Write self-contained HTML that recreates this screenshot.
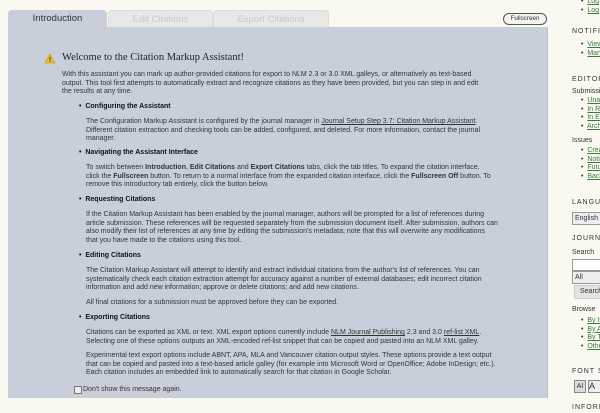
<!DOCTYPE html>
<html><head><meta charset="utf-8"><style>
html,body{overflow:hidden}
body{margin:0;width:600px;height:413px;background:#f9f9f1;font-family:"Liberation Sans",sans-serif;position:relative;color:#333}
.a{position:absolute;white-space:nowrap}
.t{font-size:7px;color:#333}
.b{font-weight:bold;color:#111}
.panel{position:absolute;left:8px;top:27px;width:539px;height:371px;background:#c8cfdb;border-right:1px solid #b8bfcb}
.tab{position:absolute;top:10px;height:17px;font-size:9.5px;text-align:center;line-height:17px;border-radius:4px 4px 0 0}
u{text-decoration:underline}
.s{font-size:7px;color:#333}
.lk{color:#3a7a3a;text-decoration:underline}
.h{font-size:7px;letter-spacing:1px;color:#333}
</style></head><body>
<div class="panel"></div>
<div class="tab" style="left:8px;width:99px;background:#c8cfdb;color:#333">Introduction</div>
<div class="tab" style="left:108px;width:103px;background:#e8e8e6;color:#c8c8c8;border:1px solid #ddd;border-bottom:none;height:16px">Edit Citations</div>
<div class="tab" style="left:213px;width:114px;background:#e8e8e6;color:#c8c8c8;border:1px solid #ddd;border-bottom:none;height:16px">Export Citations</div>
<div class="a" style="left:503px;top:13px;width:42px;height:10px;border:1px solid #555;border-radius:6px;background:#f4f4f0;font-size:6.3px;line-height:10px;text-align:center">Fullscreen</div>
<svg class="a" style="left:44px;top:53px" width="12" height="11"><path d="M6 1L11 10H1Z" fill="#f2c230" stroke="#c9a020" stroke-width=".8"/><rect x="5.5" y="4" width="1" height="3.5" fill="#333"/><rect x="5.5" y="8" width="1" height="1" fill="#333"/></svg>
<div class="a" style="left:62px;top:52px;font-family:'Liberation Serif',serif;font-size:10.5px;color:#222">Welcome to the Citation Markup Assistant!</div>
<div class="a t" style="left:62px;top:71px;line-height:8.7px">With this assistant you can mark up author-provided citations for export to NLM 2.3 or 3.0 XML galleys, or alternatively as text-based<br>output. This tool first attempts to automatically extract and recognize citations as they have been provided, but you can step in and edit<br>the results at any time.</div>
<div class="a t b" style="left:79px;top:103px">• &nbsp;Configuring the Assistant</div>
<div class="a t" style="left:86px;top:118px;line-height:8.7px">The Configuration Markup Assistant is configured by the journal manager in <u>Journal Setup Step 3.7: Citation Markup Assistant</u>.<br>Different citation extraction and checking tools can be added, configured, and deleted. For more information, contact the journal<br>manager.</div>
<div class="a t b" style="left:79px;top:149px">• &nbsp;Navigating the Assistant Interface</div>
<div class="a t" style="left:86px;top:164px;line-height:8.7px">To switch between <b>Introduction</b>, <b>Edit Citations</b> and <b>Export Citations</b> tabs, click the tab titles. To expand the citation interface,<br>click the <b>Fullscreen</b> button. To return to a normal interface from the expanded citation interface, click the <b>Fullscreen Off</b> button. To<br>remove this introductory tab entirely, click the button below.</div>
<div class="a t b" style="left:79px;top:196px">• &nbsp;Requesting Citations</div>
<div class="a t" style="left:86px;top:211px;line-height:8.7px">If the Citation Markup Assistant has been enabled by the journal manager, authors will be prompted for a list of references during<br>article submission. These references will be requested separately from the submission document itself. After submission, authors can<br>also modify their list of references at any time by editing the submission's metadata; note that this will overwrite any modifications<br>that you have made to the citations using this tool.</div>
<div class="a t b" style="left:79px;top:252px">• &nbsp;Editing Citations</div>
<div class="a t" style="left:86px;top:267px;line-height:8.7px">The Citation Markup Assistant will attempt to identify and extract individual citations from the author's list of references. You can<br>systematically check each citation extraction attempt for accuracy against a number of external databases; edit incorrect citation<br>information and add new information; approve or delete citations; and add new citations.</div>
<div class="a t" style="left:86px;top:299px">All final citations for a submission must be approved before they can be exported.</div>
<div class="a t b" style="left:79px;top:314px">• &nbsp;Exporting Citations</div>
<div class="a t" style="left:86px;top:329px;line-height:8.7px">Citations can be exported as XML or text. XML export options currently include <u>NLM Journal Publishing</u> 2.3 and 3.0 <u>ref-list XML</u>.<br>Selecting one of these options outputs an XML-encoded ref-list snippet that can be copied and pasted into an NLM XML galley.</div>
<div class="a t" style="left:86px;top:352px;line-height:8.7px">Experimental text export options include ABNT, APA, MLA and Vancouver citation output styles. These options provide a text output<br>that can be copied and pasted into a text-based article galley (for example into Microsoft Word or OpenOffice; Adobe InDesign; etc.).<br>Each citation includes an embedded link to automatically search for that citation in Google Scholar.</div>
<div class="a" style="left:74px;top:386px;width:6px;height:6px;border:1px solid #777;border-radius:1px;background:#eee"></div>
<div class="a t" style="left:83px;top:386px">Don't show this message again.</div>

<div class="a s" style="left:581px;top:-3px;line-height:9px">•&nbsp; <span class="lk">Log</span><br>•&nbsp; <span class="lk">Log</span></div>
<div class="a h" style="left:572px;top:28px">NOTIFICATIONS</div>
<div class="a s" style="left:581px;top:41px;line-height:8.7px">•&nbsp; <span class="lk">View</span><br>•&nbsp; <span class="lk">Manage</span></div>
<div class="a h" style="left:572px;top:76px">EDITOR</div>
<div class="a s" style="left:572px;top:88px">Submissions</div>
<div class="a s" style="left:581px;top:97px;line-height:8.7px">•&nbsp; <span class="lk">Unassigned</span><br>•&nbsp; <span class="lk">In Review</span><br>•&nbsp; <span class="lk">In Editing</span><br>•&nbsp; <span class="lk">Archives</span></div>
<div class="a s" style="left:572px;top:137px">Issues</div>
<div class="a s" style="left:581px;top:147px;line-height:8.7px">•&nbsp; <span class="lk">Create</span><br>•&nbsp; <span class="lk">Notify</span><br>•&nbsp; <span class="lk">Future</span><br>•&nbsp; <span class="lk">Back</span></div>
<div class="a h" style="left:572px;top:199px">LANGUAGE</div>
<div class="a s" style="left:572px;top:212px;width:40px;height:11px;border:1px solid #999;background:#eee;line-height:11px;padding-left:2px">English</div>
<div class="a h" style="left:572px;top:235px">JOURNAL</div>
<div class="a s" style="left:572px;top:249px">Search</div>
<div class="a" style="left:572px;top:259px;width:40px;height:10px;border:1px solid #999;background:#fff"></div>
<div class="a s" style="left:572px;top:271px;width:40px;height:11px;border:1px solid #999;background:#eee;line-height:11px;padding-left:2px">All</div>
<div class="a s" style="left:574px;top:285px;width:40px;height:12px;border:1px solid #ccc;background:#e4e4e0;line-height:12px;padding-left:5px;border-radius:2px">Search</div>
<div class="a s" style="left:572px;top:306px">Browse</div>
<div class="a s" style="left:581px;top:317px;line-height:8.7px">•&nbsp; <span class="lk">By Issue</span><br>•&nbsp; <span class="lk">By Author</span><br>•&nbsp; <span class="lk">By Title</span><br>•&nbsp; <span class="lk">Other</span></div>
<div class="a h" style="left:572px;top:368px">FONT SIZE</div>
<div class="a" style="left:574px;top:380px;width:10px;height:11px;border:1px solid #888;background:#ddd;font-size:7px;text-align:center;line-height:11px">AI</div>
<div class="a" style="left:588px;top:380px;width:14px;height:11px;border:1px solid #888;background:#eee;font-size:9px;line-height:11px">A</div>
<div class="a h" style="left:572px;top:404px">INFORMATION</div>
</body></html>
